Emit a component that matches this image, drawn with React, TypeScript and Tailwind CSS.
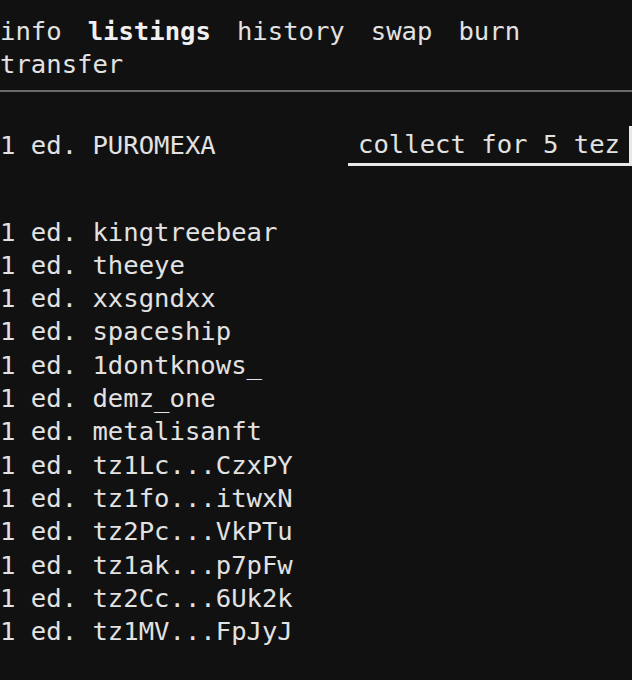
const TABS = ['info', 'listings', 'history', 'swap', 'burn', 'transfer'];

const OWNERS = [
  'kingtreebear',
  'theeye',
  'xxsgndxx',
  'spaceship',
  '1dontknows_',
  'demz_one',
  'metalisanft',
  'tz1Lc...CzxPY',
  'tz1fo...itwxN',
  'tz2Pc...VkPTu',
  'tz1ak...p7pFw',
  'tz2Cc...6Uk2k',
  'tz1MV...FpJyJ',
];

export default function App() {
  return (
    <main
      className="min-h-[680px] w-[632px] bg-[#111111] text-[#e2e2e2] text-[25.6px] leading-[33.3px]"
      style={{ fontFamily: '"DejaVu Sans Mono", "Liberation Mono", monospace' }}
    >
      {/* Tabs */}
      <nav className="flex flex-wrap gap-x-[26px] pt-[15px]">
        {TABS.map(tab => (
          <span key={tab} className={tab === 'listings' ? 'font-bold text-[#f0f0f0]' : ''}>
            {tab}
          </span>
        ))}
      </nav>
      <div className="mt-[8px] h-[2px] bg-[#6a6a6a]" />

      {/* Main listing */}
      <div className="mt-[34px] flex items-center justify-between">
        <span>1 ed. PUROMEXA</span>
        <button className="h-[40px] w-[284px] border-b-[3px] border-r-[3px] border-[#e8e8e8] pl-[10px] pt-[2px] text-left">
          collect for 5 tez
        </button>
      </div>

      {/* Owners */}
      <ul className="mt-[50px]">
        {OWNERS.map(owner => (
          <li key={owner} className="whitespace-pre">
            1 ed. {owner}
          </li>
        ))}
      </ul>
    </main>
  );
}
